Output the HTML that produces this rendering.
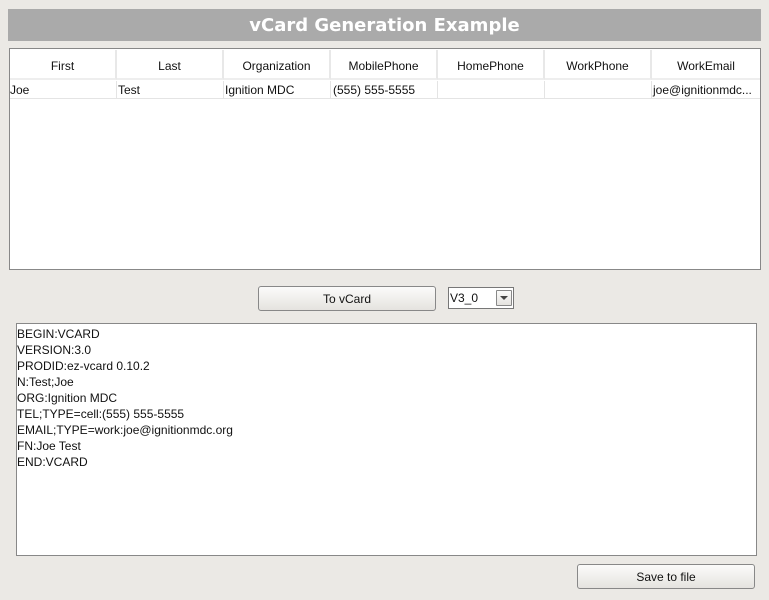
<!DOCTYPE html><html><head><style>
body{margin:0;width:769px;height:600px;background:#ebe9e5;position:relative;font-family:"Liberation Sans",sans-serif;font-size:12px;color:#111;overflow:hidden}
.a{position:absolute}
.title{left:8px;top:9px;width:753px;height:32px;background:#aaa;color:#fff;font-weight:bold;font-size:18px;text-align:center;line-height:34px;font-family:"DejaVu Sans",sans-serif}
.tbl{left:9px;top:48px;width:750px;height:220px;background:#fff;border:1px solid #888}
.h{top:1px;height:30px;line-height:33px;text-align:center;border-right:2px solid #e8e8e8;border-bottom:2px solid #eee;box-sizing:border-box}
.c{top:32px;height:18px;line-height:19px;border-right:1px solid #e4e4e4;border-bottom:1px solid #e4e4e4;box-sizing:border-box;white-space:nowrap;overflow:hidden}
.btn{border:1px solid #888;border-radius:3px;background:linear-gradient(#fbfbfa,#e5e3df);text-align:center;box-sizing:border-box}
.ta{left:16px;top:323px;width:741px;height:233px;background:#fff;border:1px solid #888;box-sizing:border-box;padding:2px 0 0 0;line-height:16px}
</style></head><body>
<div class="a title">vCard Generation Example</div>
<div class="a tbl">
<div class="a h" style="left:0;width:107px">First</div>
<div class="a h" style="left:107px;width:107px">Last</div>
<div class="a h" style="left:214px;width:107px">Organization</div>
<div class="a h" style="left:321px;width:107px">MobilePhone</div>
<div class="a h" style="left:428px;width:107px">HomePhone</div>
<div class="a h" style="left:535px;width:107px">WorkPhone</div>
<div class="a h" style="left:642px;width:108px;border-right:0">WorkEmail</div>
<div class="a c" style="left:0;width:107px">Joe</div>
<div class="a c" style="left:107px;width:107px;padding-left:1px">Test</div>
<div class="a c" style="left:214px;width:107px;padding-left:1px">Ignition MDC</div>
<div class="a c" style="left:321px;width:107px;padding-left:2px">(555) 555-5555</div>
<div class="a c" style="left:428px;width:107px"></div>
<div class="a c" style="left:535px;width:107px"></div>
<div class="a c" style="left:642px;width:108px;padding-left:1px;border-right:0">joe@ignitionmdc...</div>
</div>
<div class="a btn" style="left:258px;top:286px;width:178px;height:25px;line-height:24px">To vCard</div>
<div class="a" style="left:448px;top:287px;width:66px;height:22px;border:1px solid #777;box-sizing:border-box;background:#fff;line-height:21px;padding-left:1px">V3_0
<div class="a btn" style="left:47px;top:2px;width:16px;height:16px;border-radius:1px"><svg width="14" height="14" style="position:absolute;left:0;top:0"><path d="M3 5h8l-4 4z" fill="#444"/></svg></div></div>
<div class="a ta">BEGIN:VCARD<br>VERSION:3.0<br>PRODID:ez-vcard 0.10.2<br>N:Test;Joe<br>ORG:Ignition MDC<br>TEL;TYPE=cell:(555) 555-5555<br>EMAIL;TYPE=work:joe@ignitionmdc.org<br>FN:Joe Test<br>END:VCARD</div>
<div class="a btn" style="left:577px;top:564px;width:178px;height:25px;line-height:24px">Save to file</div>
</body></html>
